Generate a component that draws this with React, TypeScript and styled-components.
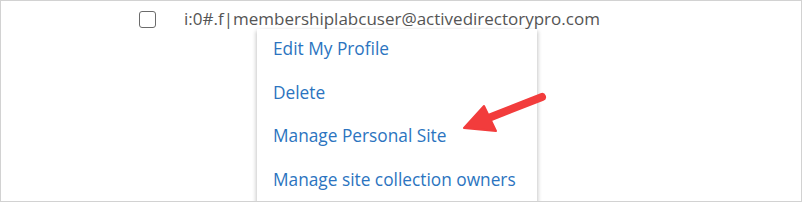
import * as React from "react";
import styled, { createGlobalStyle } from "styled-components";

const GlobalStyle = createGlobalStyle`
  html, body {
    margin: 0;
    padding: 0;
    background: #ffffff;
  }
`;

const Frame = styled.div`
  position: relative;
  box-sizing: border-box;
  width: 802px;
  height: 202px;
  border: 1px solid #d2d2d2;
  background: #ffffff;
  overflow: hidden;
  font-family: "Open Sans", "Noto Sans", sans-serif;
`;

const UserRow = styled.div`
  display: flex;
  align-items: center;
  gap: 28px;
  padding: 8px 0 0 138px;
`;

const CheckBox = styled.span`
  display: inline-block;
  box-sizing: border-box;
  width: 17px;
  height: 17px;
  border: 1.5px solid #6b6b6b;
  border-radius: 3px;
`;

const Login = styled.span`
  font-size: 17px;
  color: #555555;
  line-height: 20px;
`;

const Menu = styled.ul`
  position: absolute;
  left: 256px;
  top: 28px;
  width: 280px;
  height: 180px;
  margin: 0;
  padding: 6px 0 0;
  list-style: none;
  background: #ffffff;
  box-shadow: -3px 0 4px -2px rgba(0, 0, 0, 0.22), 3px 0 4px -2px rgba(0, 0, 0, 0.22);
`;

const MenuItem = styled.li`
  padding: 0 0 0 16px;
  height: 43.7px;
  line-height: 28px;
  font-size: 17.3px;
  color: #2b74c0;
`;

const Pointer = styled.svg`
  position: absolute;
  left: 0;
  top: 0;
  pointer-events: none;
`;

const items = [
  "Edit My Profile",
  "Delete",
  "Manage Personal Site",
  "Manage site collection owners",
];

export default function App() {
  return (
    <>
      <GlobalStyle />
      <Frame>
        <UserRow>
          <CheckBox />
          <Login>i:0#.f|membershiplabcuser@activedirectorypro.com</Login>
        </UserRow>
        <Menu>
          {items.map((it) => (
            <MenuItem key={it}>{it}</MenuItem>
          ))}
        </Menu>
        <Pointer width="802" height="202" viewBox="0 0 802 202">
          <line x1="541" y1="96" x2="485" y2="118" stroke="#f23c3c" strokeWidth="8" strokeLinecap="round" />
          <polygon points="463,127 483,105 495,130" fill="#f23c3c" stroke="#f23c3c" strokeWidth="2" strokeLinejoin="round" />
        </Pointer>
      </Frame>
    </>
  );
}
